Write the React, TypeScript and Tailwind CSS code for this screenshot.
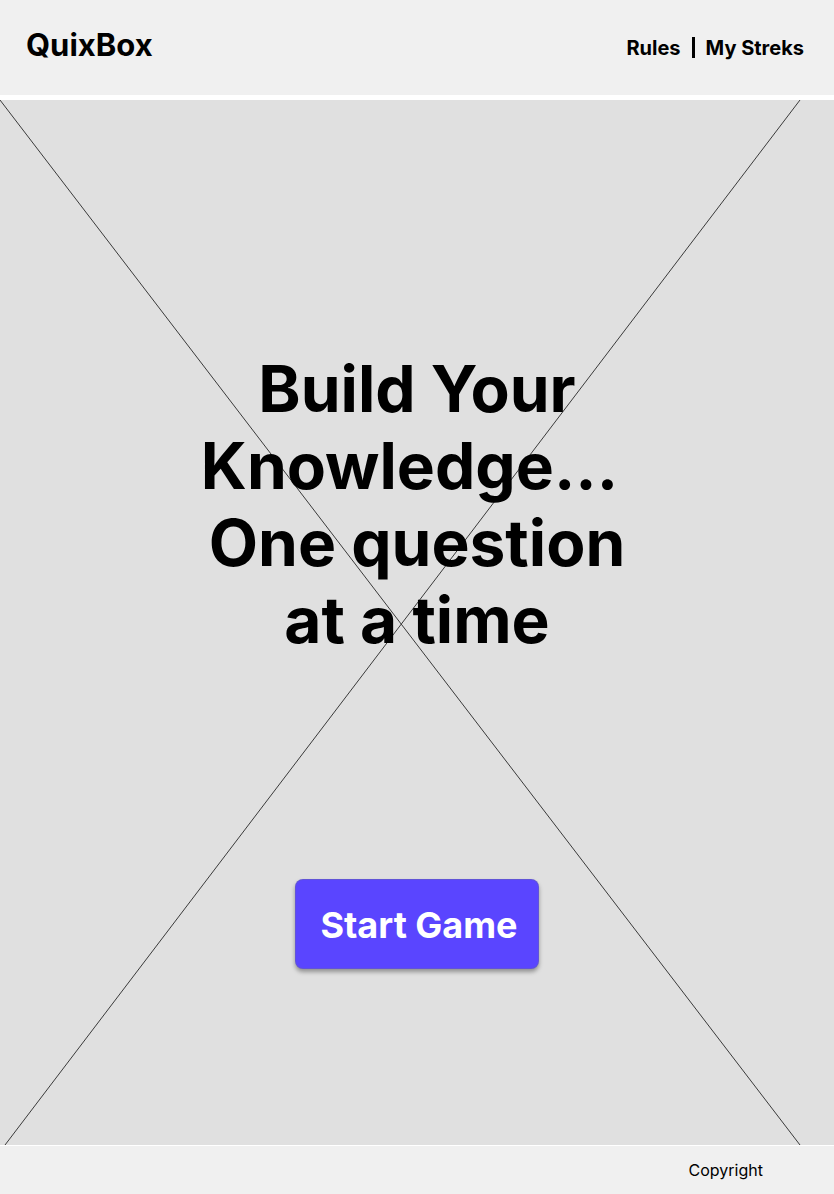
import React from 'react';

const Header: React.FC = () => (
    <header className="h-[95px] bg-[#f0f0f0] flex items-center justify-between pl-[26px] pr-[30px]">
        <h1 className="text-[31px] font-bold text-black leading-none -mt-[6px]">QuixBox</h1>
        <nav className="flex items-center text-[20px] font-bold text-black leading-none">
            <a href="#" className="text-black">Rules</a>
            <span className="mx-[11px] inline-block w-[3px] h-[21px] bg-black" />
            <a href="#" className="text-black">My Streks</a>
        </nav>
    </header>
);

const Placeholder: React.FC = () => (
    <svg
        className="absolute inset-0 w-full h-full pointer-events-none"
        viewBox="0 0 834 1045"
        preserveAspectRatio="none"
    >
        <line x1="0" y1="0" x2="800" y2="1045" stroke="#3a3a3a" strokeWidth="1" />
        <line x1="800" y1="0" x2="5" y2="1045" stroke="#3a3a3a" strokeWidth="1" />
    </svg>
);

const App: React.FC = () => {
    return (
        <div className="min-h-screen bg-white flex flex-col" style={{ fontFamily: 'Inter, "Noto Sans", sans-serif' }}>
            <Header />
            <main className="relative mt-[5px] h-[1045px] bg-[#e0e0e0] flex flex-col items-center">
                <Placeholder />
                <h2 className="relative mt-[250px] text-[64px] font-bold leading-[77px] text-black text-center">
                    Build Your<br />
                    Knowledge...&nbsp;<br />
                    One question<br />
                    at a time
                </h2>
                <button className="relative mt-[221px] w-[244px] h-[90px] pl-[4px] pt-[2px] rounded-[8px] bg-[#5a45ff] text-white text-[36px] font-bold shadow-[0_3px_4px_rgba(0,0,0,0.35)] border border-[#6b6b9a]/40">
                    Start Game
                </button>
            </main>
            <footer className="mt-px h-[48px] bg-[#f0f0f0] flex items-center justify-end pr-[71px]">
                <span className="text-[16px] text-black">Copyright</span>
            </footer>
        </div>
    );
};

export default App;
